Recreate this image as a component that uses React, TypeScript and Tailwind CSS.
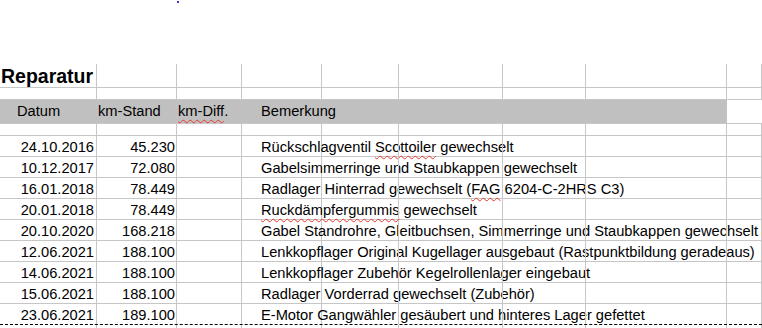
import { ReactNode } from 'react'

type Cell = {
    content?: ReactNode
    className?: string
}

type Repair = {
    date: string
    km: string
    note: ReactNode
}

// red squiggle like the spell check in the sheet
const Typo = ({ children }: { children: ReactNode }) => (
    <span className='underline decoration-wavy decoration-[#e8382f] decoration-1 underline-offset-[3px]'>{children}</span>
)

const repairs: Repair[] = [
    { date: '24.10.2016', km: '45.230', note: <>Rückschlagventil <Typo>Scottoiler</Typo> gewechselt</> },
    { date: '10.12.2017', km: '72.080', note: 'Gabelsimmerringe und Staubkappen gewechselt' },
    { date: '16.01.2018', km: '78.449', note: <>Radlager Hinterrad gewechselt (<Typo>FAG</Typo> 6204-C-2HRS C3)</> },
    { date: '20.01.2018', km: '78.449', note: <><Typo>Ruckdämpfergummis</Typo> gewechselt</> },
    { date: '20.10.2020', km: '168.218', note: 'Gabel Standrohre, Gleitbuchsen, Simmerringe und Staubkappen gewechselt' },
    { date: '12.06.2021', km: '188.100', note: 'Lenkkopflager Original Kugellager ausgebaut (Rastpunktbildung geradeaus)' },
    { date: '14.06.2021', km: '188.100', note: 'Lenkkopflager Zubehör Kegelrollenlager eingebaut' },
    { date: '15.06.2021', km: '188.100', note: 'Radlager Vorderrad gewechselt (Zubehör)' },
    { date: '23.06.2021', km: '189.100', note: 'E-Motor Gangwähler gesäubert und hinteres Lager gefettet' },
]

const Row = ({ cells = [], className = '' }: { cells?: Cell[], className?: string }) => (
    <div className={`grid grid-cols-[97px_80px_65px_80px_77px_104px_83px_141px_1fr] ${className}`}>
        {Array.from({ length: 9 }).map((_, i) => (
            <div
                key={i}
                className={`flex whitespace-nowrap border-r border-[#c6c6c6] ${cells[i]?.className ?? ''}`}
            >
                {cells[i]?.content}
            </div>
        ))}
    </div>
)

const App = () => {
    return (
        <div className="w-[762px] h-[328px] overflow-hidden bg-white text-black font-['Liberation_Sans',Arial,sans-serif] text-[14.67px] leading-[17px]">
            {/* empty area above the sheet */}
            <div className='h-[63px]'>
                <div className='ml-[177px] mt-[1px] w-[2px] h-[2px] bg-[#3a3ad8]'></div>
            </div>

            <Row
                className='h-[24px] border-b border-[#c6c6c6]'
                cells={[{ content: 'Reparatur', className: 'items-end pl-px font-bold text-[19.5px] leading-[22px]' }]}
            />
            <Row className='h-[12px] border-b border-[#c6c6c6]' />

            {/* column header, one grey band over A-H */}
            <div className='flex h-[24px] border-b border-[#c6c6c6]'>
                <div className='w-[727px] bg-[#c0c0c0] grid grid-cols-[97px_80px_65px_80px_1fr] items-center whitespace-nowrap'>
                    <div className='pl-[17px]'>Datum</div>
                    <div className='pl-px'>km-Stand</div>
                    <div className='pl-px'><Typo>km-Diff</Typo>.</div>
                    <div className='pl-[19px]'>Bemerkung</div>
                    <div></div>
                </div>
                <div className='flex-1'></div>
            </div>

            <Row className='h-[12px] border-b border-[#c6c6c6]' />

            {repairs.map((r, idx) => (
                <Row
                    key={r.date + idx}
                    className={`h-[21px] border-b ${idx === repairs.length - 1 ? 'border-dashed border-black' : 'border-[#c6c6c6]'}`}
                    cells={[
                        { content: r.date, className: 'items-end justify-end pr-[2px]' },
                        { content: r.km, className: 'items-end justify-end pr-px' },
                        {},
                        { content: <span>{r.note}</span>, className: 'items-end pl-[19px]' },
                    ]}
                />
            ))}

            <Row className='h-[20px]' />
        </div>
    )
}

export default App
